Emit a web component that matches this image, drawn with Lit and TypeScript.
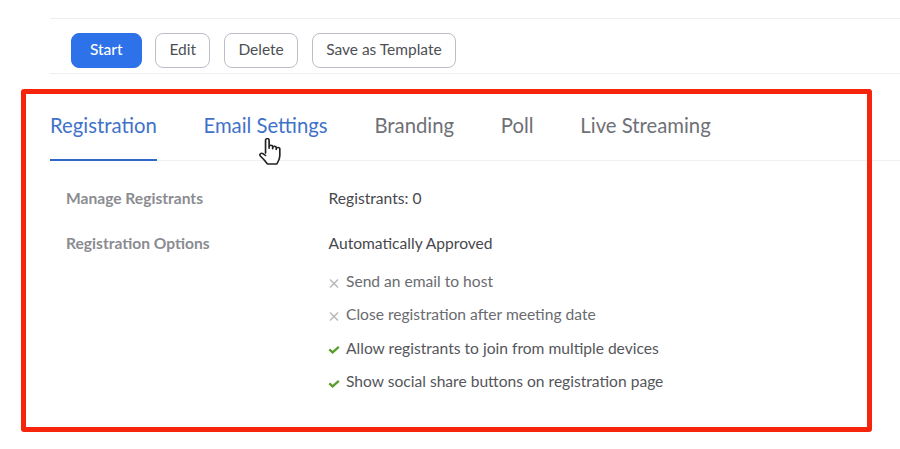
import { LitElement, html, css, svg } from "lit";
import { customElement } from "lit/decorators.js";

const cross = svg`<svg class="ic" width="12" height="12" viewBox="0 0 12 12"><path d="M2 2.5 10 10.5M10 2.5 2 10.5" stroke="#b5b5b8" stroke-width="1.3" fill="none"/></svg>`;
const check = svg`<svg class="ic" width="12" height="12" viewBox="0 0 12 12"><path d="M1.3 6.3 4.6 9.4 10.8 3.8" stroke="#5b9e2d" stroke-width="2.3" fill="none"/></svg>`;

@customElement("app-root")
export class AppRoot extends LitElement {
  static styles = css`
    :host { display: block; width: 900px; height: 449px; position: relative; overflow: hidden; background: #fff; font-family: Lato, "Open Sans", sans-serif; color: #444; }
    .page { padding: 18px 0 0 50px; }
    .actions { display: flex; gap: 13.4px; padding: 14px 0 5px 21px; border-top: 1px solid #efeff1; border-bottom: 1px solid #efeff1; }
    .btn { height: 35px; box-sizing: border-box; display: flex; align-items: center; padding: 0 13.5px 3px; border: 1px solid #bdbdc9; border-radius: 8px; font-size: 15.5px; color: #4e4f55; }
    .btn.primary { background: #2d72e8; border-color: #2d72e8; color: #fff; font-weight: 500; width: 70.5px; justify-content: center; }
    .tabs { display: flex; gap: 46.8px; margin-top: 15px; height: 72px; box-sizing: border-box; border-bottom: 1px solid #f2f2f4; font-size: 20.3px; color: #6e7076; }
    .tab { padding-top: 21px; height: 72px; box-sizing: border-box; line-height: 30px; }
    .tab.blue { color: #3f72c9; }
    .tab.active { border-bottom: 2px solid #2f68c6; }
    .body { padding: 25px 0 0 16px; font-size: 15.6px; }
    .row { display: grid; grid-template-columns: 262.6px 1fr; height: 44.5px; line-height: 24px; }
    .label { color: #8b8c91; font-weight: 700; }
    .value { color: #47484d; }
    .opts { margin: -6px 0 0 262px; display: flex; flex-direction: column; gap: 9.4px; color: #6a6b70; }
    .opt { display: flex; align-items: center; gap: 6px; height: 24px; }
    .opt.on { color: #55565b; }
    .ic { flex: none; margin-top: 3px; }
    .frame { position: absolute; left: 21px; top: 89px; width: 851px; height: 343px; box-sizing: border-box; border: 5.5px solid #f6230d; border-radius: 3px; pointer-events: none; }
    .cursor { position: absolute; left: 259px; top: 138px; }
  `;

  render() {
    return html`
      <div class="page">
        <div class="actions">
          <div class="btn primary">Start</div>
          <div class="btn">Edit</div>
          <div class="btn">Delete</div>
          <div class="btn">Save as Template</div>
        </div>
        <div class="tabs">
          <div class="tab blue active">Registration</div>
          <div class="tab blue">Email Settings</div>
          <div class="tab">Branding</div>
          <div class="tab">Poll</div>
          <div class="tab">Live Streaming</div>
        </div>
        <div class="body">
          <div class="row"><div class="label">Manage Registrants</div><div class="value">Registrants: 0</div></div>
          <div class="row"><div class="label">Registration Options</div><div class="value">Automatically Approved</div></div>
          <div class="opts">
            <div class="opt">${cross}<span>Send an email to host</span></div>
            <div class="opt">${cross}<span>Close registration after meeting date</span></div>
            <div class="opt on">${check}<span>Allow registrants to join from multiple devices</span></div>
            <div class="opt on">${check}<span>Show social share buttons on registration page</span></div>
          </div>
        </div>
      </div>
      <div class="frame"></div>
      <svg class="cursor" width="22" height="27" viewBox="0.5 1 18.5 25" preserveAspectRatio="none"><path d="M6 15V3.2C6 1 9 1 9 3.2V10.5M9 10.5V9C9 7.4 12 7.4 12 9V11M12 11V9.8C12 8.3 15 8.3 15 9.8V11.6M15 11.6V10.8C15 9.4 18 9.4 18 10.8V17.5C18 21 16.5 23 15.5 25H7.5C6 22.5 4 20 1.6 17.6C.6 16.2 2.2 14.4 3.8 15.4L6 17.2" fill="#fff" stroke="#222" stroke-width="1.4" stroke-linejoin="round" stroke-linecap="round"/></svg>
    `;
  }
}
